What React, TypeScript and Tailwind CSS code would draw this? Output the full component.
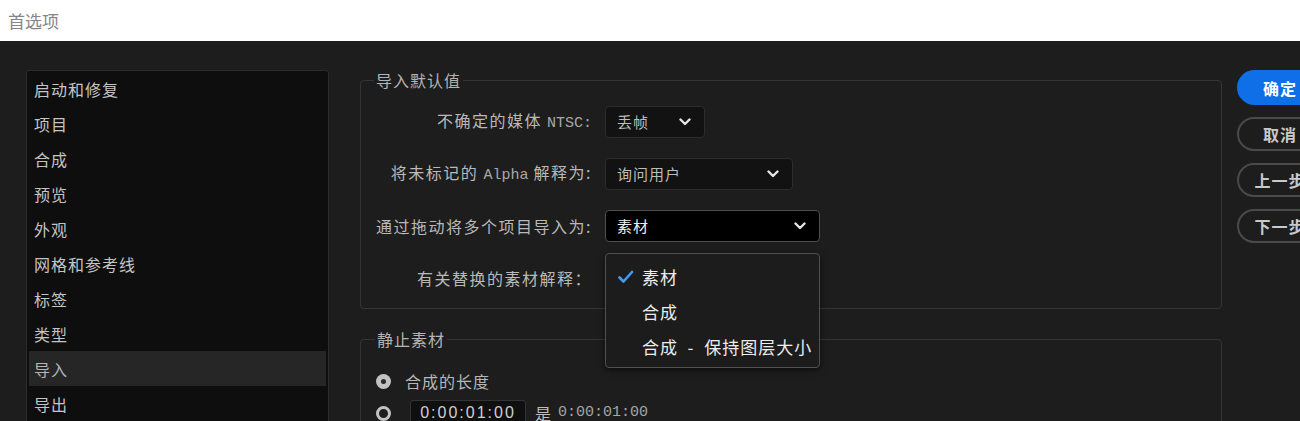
import React from "react";

const cjk = { fontFamily: '"Noto Sans CJK SC", "Noto Sans", sans-serif' };
const mono = { fontFamily: '"Liberation Mono", "DejaVu Sans Mono", monospace' };

const sections = [
  "启动和修复",
  "项目",
  "合成",
  "预览",
  "外观",
  "网格和参考线",
  "标签",
  "类型",
  "导入",
  "导出",
];

const Chevron = () => (
  <svg width="12" height="8" viewBox="0 0 12 8" fill="none">
    <path d="M1.5 1.5 L6 6 L10.5 1.5" stroke="#e6e6e6" strokeWidth="2.4" strokeLinecap="round" strokeLinejoin="round" />
  </svg>
);

const Check = () => (
  <svg width="16" height="14" viewBox="0 0 16 14" fill="none">
    <path d="M1.5 7.5 L5.5 11.5 L14 2" stroke="#3f9cf7" strokeWidth="2.6" strokeLinecap="round" strokeLinejoin="round" />
  </svg>
);

function Select({ value, width, active }: { value: string; width: string; active?: boolean }) {
  return (
    <div
      className={`${width} h-[32px] flex items-center justify-between pl-[11px] pr-[13px] rounded-[4px] border ${
        active ? "bg-black border-[#4e4e4e] text-[#eeeeee]" : "bg-[#121212] border-[#2c2c2c] text-[#bdbdbd]"
      }`}
    >
      <span className="text-[15px] tracking-[1px]">{value}</span>
      <Chevron />
    </div>
  );
}

function Row({ label, children }: { label: React.ReactNode; children: React.ReactNode }) {
  return (
    <div className="flex items-center h-[32px]">
      <div className="w-[231px] text-right text-[16px] tracking-[1.5px] text-[#b9b9b9] whitespace-nowrap">{label}</div>
      <div className="ml-[13px] relative">{children}</div>
    </div>
  );
}

export default function App() {
  return (
    <div className="w-[1300px] h-[421px] overflow-hidden bg-[#1d1d1d] flex flex-col" style={cjk}>
      {/* 标题栏 */}
      <div className="h-[41px] bg-white flex items-center pl-[8px] shrink-0">
        <span className="text-[17px] text-[#858585]">首选项</span>
      </div>

      <div className="flex pt-[29px] pl-[26px]">
        {/* 左侧分类列表 */}
        <div className="w-[303px] h-[400px] shrink-0 bg-[#0e0e0e] border border-[#2c2c2c] rounded-[3px] px-[2px]">
          {sections.map((s) => (
            <div
              key={s}
              className={`h-[35px] flex items-center pl-[5px] text-[16px] tracking-[1px] ${
                s === "导入" ? "bg-[#262626] text-[#b5b5b5]" : "text-[#c4c4c4]"
              }`}
            >
              {s}
            </div>
          ))}
        </div>

        {/* 中间设置区 */}
        <div className="w-[862px] ml-[31px] shrink-0">
          <fieldset className="border border-[#353535] rounded-[4px]">
            <legend className="ml-[13px] px-[2px] text-[16px] leading-[20px] tracking-[1px] text-[#b4b4b4]">导入默认值</legend>
            <div className="pt-[16px] pb-[14px] flex flex-col gap-[20px]">
              <Row
                label={
                  <>
                    不确定的媒体 <span className="text-[15px] tracking-normal text-[#a8a8a8]" style={mono}>NTSC:</span>
                  </>
                }
              >
                <Select value="丢帧" width="w-[100px]" />
              </Row>
              <Row
                label={
                  <>
                    将未标记的 <span className="text-[15px] tracking-normal text-[#a8a8a8]" style={mono}>Alpha</span> 解释为:
                  </>
                }
              >
                <Select value="询问用户" width="w-[188px]" />
              </Row>
              <Row label="通过拖动将多个项目导入为:">
                <Select value="素材" width="w-[215px]" active />
                {/* 展开的下拉菜单 */}
                <div className="absolute left-0 top-[43px] z-10 w-[215px] h-[115px] py-[5px] bg-[#1c1c1c] border border-[#505050] rounded-[4px] shadow-[0_2px_6px_rgba(0,0,0,0.6)]">
                  {[
                    { t: "素材", c: true },
                    { t: "合成", c: false },
                    { t: "合成 - 保持图层大小", c: false },
                  ].map((o) => (
                    <div key={o.t} className="h-[35px] flex items-center text-[17px] text-[#ededed]">
                      <div className="w-[36px] pl-[12px]">{o.c && <Check />}</div>
                      <span className="tracking-[1px] whitespace-pre">{o.t.replace(" - ", "  -  ")}</span>
                    </div>
                  ))}
                </div>
              </Row>
              <Row label="有关替换的素材解释：">
                <div className="w-[215px] h-[32px]" />
              </Row>
            </div>
          </fieldset>

          <fieldset className="mt-[20px] border border-[#353535] rounded-[4px] h-[200px]">
            <legend className="ml-[14px] px-[2px] text-[16px] leading-[20px] tracking-[1px] text-[#b4b4b4]">静止素材</legend>
            <div className="pt-[16px] pl-[15px]">
              <div className="flex items-center h-[32px]">
                <div className="w-[15px] h-[15px] rounded-full bg-[#c2c2c2] flex items-center justify-center">
                  <div className="w-[5px] h-[5px] rounded-full bg-[#2a2a2a]" />
                </div>
                <span className="ml-[14px] text-[16px] tracking-[1px] text-[#b7b7b7]">合成的长度</span>
              </div>
              <div className="flex items-center h-[32px]">
                <div className="w-[15px] h-[15px] rounded-full border-[3px] border-[#c2c2c2] bg-[#1d1d1d]" />
                <div
                  className="ml-[19px] w-[116px] h-[26px] bg-[#0f0f0f] border border-[#333333] rounded-[3px] flex items-center justify-center text-[16px] tracking-[2px] text-[#cfcfcf]"
                  style={{ fontFamily: '"Liberation Sans", Arial, sans-serif' }}
                >
                  0:00:01:00
                </div>
                <span className="ml-[9px] text-[16px] text-[#bdbdbd]">是</span>
                <span className="ml-[7px] text-[15px] text-[#a6a6a6]" style={mono}>0:00:01:00</span>
              </div>
            </div>
          </fieldset>
        </div>

        {/* 右侧按钮 */}
        <div className="ml-[15px] w-[86px] shrink-0 flex flex-col gap-[12px]">
          <button className="h-[35px] rounded-full bg-[#0f6fe6] text-white text-[16px] font-bold tracking-[1px]">确定</button>
          {["取消", "上一步", "下一步"].map((b) => (
            <button
              key={b}
              className="h-[34px] rounded-full border-2 border-[#4a4a4a] text-[#c9c9c9] text-[16px] font-bold tracking-[1px]"
            >
              {b}
            </button>
          ))}
        </div>
      </div>
    </div>
  );
}
